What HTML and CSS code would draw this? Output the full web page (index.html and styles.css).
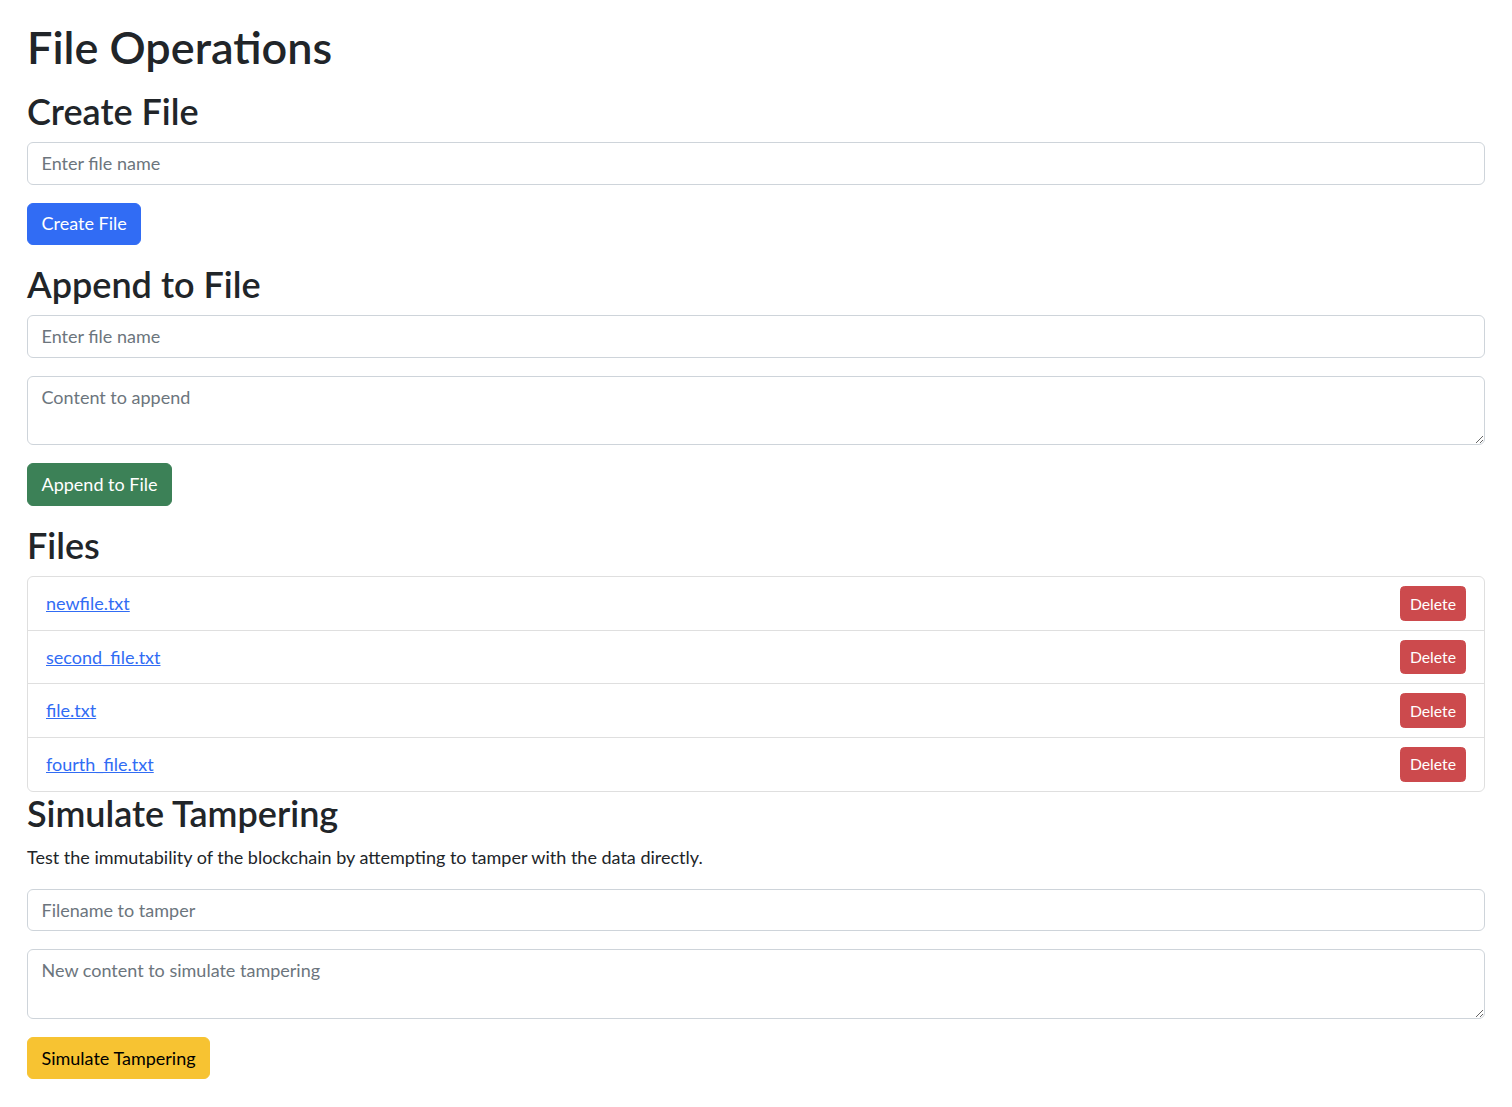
FILE: index.html
```html
<!DOCTYPE html>
<html lang="en">
<head>
<meta charset="utf-8">
<title>File Operations</title>
<link rel="stylesheet" href="styles.css">
</head>
<body>
<div class="container">
  <h1 class="title">File Operations</h1>

  <section class="block">
    <h2 class="heading">Create File</h2>
    <input class="form-control field" type="text" placeholder="Enter file name">
    <button class="btn btn-primary">Create File</button>
  </section>

  <section class="block">
    <h2 class="heading">Append to File</h2>
    <input class="form-control field" type="text" placeholder="Enter file name">
    <textarea class="form-control field" rows="2" placeholder="Content to append"></textarea>
    <button class="btn btn-success">Append to File</button>
  </section>

  <section>
    <h2 class="heading">Files</h2>
    <ul class="list-group">
      <li class="list-item"><a href="#" class="file-link">newfile.txt</a><button class="btn btn-sm btn-danger">Delete</button></li>
      <li class="list-item"><a href="#" class="file-link">second_file.txt</a><button class="btn btn-sm btn-danger">Delete</button></li>
      <li class="list-item"><a href="#" class="file-link">file.txt</a><button class="btn btn-sm btn-danger">Delete</button></li>
      <li class="list-item"><a href="#" class="file-link">fourth_file.txt</a><button class="btn btn-sm btn-danger">Delete</button></li>
    </ul>
  </section>

  <section class="block">
    <h2 class="heading">Simulate Tampering</h2>
    <p class="lead-text">Test the immutability of the blockchain by attempting to tamper with the data directly.</p>
    <input class="form-control field" type="text" placeholder="Filename to tamper">
    <textarea class="form-control field" rows="2" placeholder="New content to simulate tampering"></textarea>
    <button class="btn btn-warning">Simulate Tampering</button>
  </section>
</div>
</body>
</html>
```

FILE: styles.css
```css
* { box-sizing: border-box; }
html, body { margin: 0; padding: 0; }
body {
  font-family: Lato, "Open Sans", sans-serif;
  font-size: 18px;
  line-height: 1.5;
  color: #212529;
  background: #fff;
}
.container {
  padding: 20px 27px 20px;
}
.title {
  font-size: 45px;
  font-weight: 600;
  line-height: 1.2;
  margin: 0 0 16px;
}
.heading {
  font-size: 36px;
  font-weight: 600;
  line-height: 1.2;
  margin: 0 0 9px;
}
.block { margin-bottom: 18px; }
.block:last-child { margin-bottom: 0; }
.form-control {
  display: block;
  width: 100%;
  font-family: inherit;
  font-size: 18px;
  line-height: 1.5;
  color: #212529;
  padding: 6.75px 13.5px;
  border: 1px solid #ced4da;
  border-radius: 6px;
  background: #fff;
  margin: 0 0 18px;
}
.form-control::placeholder { color: #6c757d; opacity: 1; }
textarea.form-control { resize: vertical; min-height: 69px; }
.btn {
  display: inline-block;
  font-family: inherit;
  font-size: 18px;
  line-height: 1.5;
  padding: 6.75px 13.5px;
  border: 1px solid transparent;
  border-radius: 6px;
  color: #fff;
  cursor: pointer;
}
.btn-primary { background: #316cf4; border-color: #316cf4; }
.btn-success { background: #3c8157; border-color: #3c8157; }
.btn-warning { background: #f7c332; border-color: #f7c332; color: #000; }
.btn-danger { background: #cc4a4d; border-color: #cc4a4d; }
.btn-sm {
  font-size: 15.75px;
  padding: 4.5px 9px;
  border-radius: 4.5px;
}
.list-group {
  list-style: none;
  margin: 0;
  padding: 0;
  border: 1px solid #dfdfdf;
  border-radius: 6px;
}
.list-item {
  display: flex;
  justify-content: space-between;
  align-items: center;
  padding: 9px 18px;
  border-bottom: 1px solid #dfdfdf;
}
.list-item:last-child { border-bottom: 0; }
.file-link { color: #316cf4; text-decoration: underline; }
.lead-text { margin: 0 0 18px; }
```
